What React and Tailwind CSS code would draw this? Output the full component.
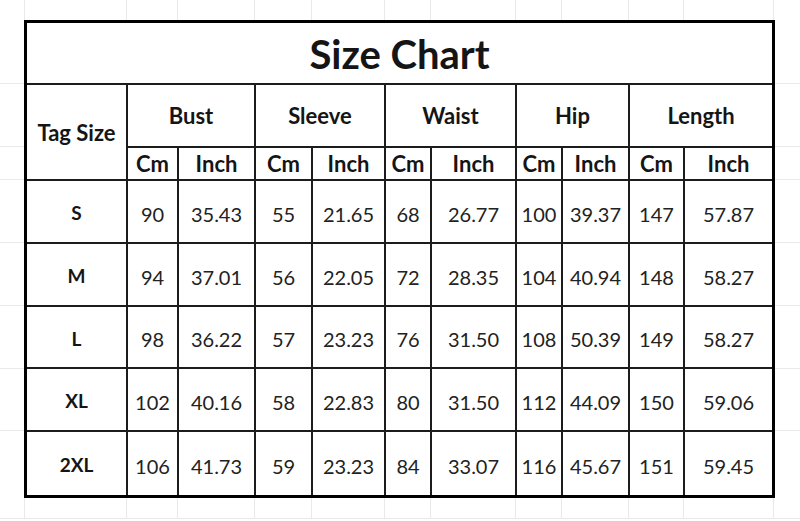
import React from 'react';

const COLS = [25, 102, 51, 77, 57, 73, 46, 85, 46, 67, 55, 90];
const SIDE_ROWS = [64, 63, 33, 63, 63, 63, 62, 67];

const GROUPS = ['Bust', 'Sleeve', 'Waist', 'Hip', 'Length'];

const ROWS = [
  ['S', '90', '35.43', '55', '21.65', '68', '26.77', '100', '39.37', '147', '57.87'],
  ['M', '94', '37.01', '56', '22.05', '72', '28.35', '104', '40.94', '148', '58.27'],
  ['L', '98', '36.22', '57', '23.23', '76', '31.50', '108', '50.39', '149', '58.27'],
  ['XL', '102', '40.16', '58', '22.83', '80', '31.50', '112', '44.09', '150', '59.06'],
  ['2XL', '106', '41.73', '59', '23.23', '84', '33.07', '116', '45.67', '151', '59.45'],
];

function ColStrip({ className }) {
  return (
    <div className={`flex ${className}`}>
      {COLS.map((w, i) => (
        <div key={i} style={{ width: w }} className="h-full shrink-0 border-r border-[#e9e9e9]" />
      ))}
      <div className="flex-1" />
    </div>
  );
}

function RowStrip({ className }) {
  return (
    <div className={`flex flex-col ${className}`}>
      {SIDE_ROWS.map((h, i) => (
        <div key={i} style={{ height: h }} className={`shrink-0 ${i < SIDE_ROWS.length - 1 ? 'border-b border-[#e9e9e9]' : ''}`} />
      ))}
    </div>
  );
}

export default function App() {
  const cell = 'bg-white flex items-center justify-center';
  return (
    <div className="w-[800px] h-[521px] bg-white flex flex-col overflow-hidden text-[#151515] font-['Lato','Liberation_Sans',sans-serif]">
      {/* spreadsheet grid above */}
      <ColStrip className="h-[20px] shrink-0" />

      <div className="flex shrink-0">
        <RowStrip className="w-[24px] shrink-0" />

        {/* Size table */}
        <div className="grid grid-cols-[99px_49px_75px_55px_71px_44px_83px_44px_65px_53px_87px] grid-rows-[60px_61px_31px_61px_61px_60px_61px_63px] gap-[2px] bg-[#1c1c1c] border-[3px] border-black shrink-0">
          <div className={`${cell} col-span-11 text-[40px] font-bold pt-0.5`}>Size Chart</div>

          <div className={`${cell} row-span-2 text-[22px] font-bold`}>Tag Size</div>
          {GROUPS.map(g => (
            <div key={g} className={`${cell} col-span-2 text-[22px] font-bold`}>{g}</div>
          ))}
          {GROUPS.map(g => (
            <React.Fragment key={g}>
              <div className={`${cell} text-[22px] font-bold`}>Cm</div>
              <div className={`${cell} text-[22px] font-bold`}>Inch</div>
            </React.Fragment>
          ))}

          {ROWS.map(row => row.map((v, i) => (
            <div key={row[0] + i} className={`${cell} pt-1 ${i === 0 ? 'text-[19px] font-bold' : 'text-[20px] text-[#222]'}`}>{v}</div>
          )))}
        </div>

        <RowStrip className="flex-1" />
      </div>

      {/* spreadsheet grid below */}
      <ColStrip className="h-[21px] shrink-0 border-b border-[#e9e9e9]" />
    </div>
  );
}
